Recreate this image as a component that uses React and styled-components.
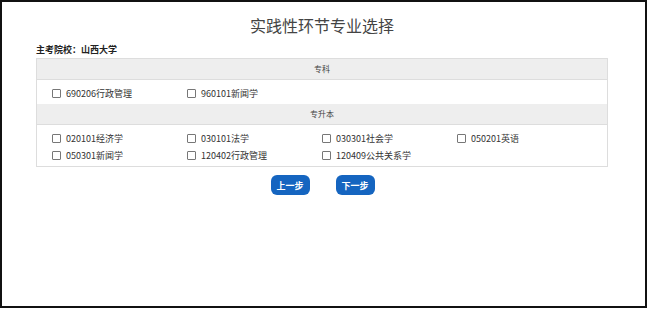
import React from "react";
import styled, { createGlobalStyle } from "styled-components";

const GlobalStyle = createGlobalStyle`
  html, body {
    margin: 0;
    padding: 0;
    background: #fff;
  }
  body {
    font-family: "Noto Sans CJK SC", "Noto Sans", sans-serif;
  }
`;

const Frame = styled.div`
  box-sizing: border-box;
  width: 647px;
  height: 308px;
  border: 2px solid #111;
  padding: 0 37px 0 34px;
`;

const Title = styled.h1`
  margin: 0;
  padding-top: 12px;
  height: 26px;
  font-size: 16px;
  line-height: 22px;
  font-weight: normal;
  color: #444;
  text-align: center;
`;

const School = styled.div`
  margin-top: 4px;
  font-size: 9px;
  line-height: 12px;
  font-weight: bold;
  color: #222;
`;

const Table = styled.div`
  margin-top: 2px;
  border: 1px solid #ddd;
`;

const Header = styled.div`
  height: 20px;
  line-height: 20px;
  background: #eee;
  border-bottom: 1px solid #ddd;
  text-align: center;
  font-size: 8px;
  color: #444;
`;

const Grid = styled.div`
  display: grid;
  grid-template-columns: repeat(4, 135px);
  row-gap: 5px;
  padding: 7px 15px 5px;
`;

const Item = styled.label`
  display: flex;
  align-items: center;
  gap: 5px;
  height: 12px;
  font-size: 9px;
  color: #333;
`;

const Box = styled.span`
  width: 7px;
  height: 7px;
  border: 1px solid #777;
  border-radius: 1px;
  background: #fff;
`;

const Actions = styled.div`
  display: flex;
  justify-content: center;
  gap: 26px;
  margin-top: 8px;
  padding-left: 1px;
`;

const Button = styled.button`
  display: block;
  width: 39px;
  height: 20px;
  padding: 0;
  border: none;
  border-radius: 6px;
  background: #1565c0;
  color: #fff;
  font-family: inherit;
  font-size: 9px;
  font-weight: bold;
`;

const sections = [
  { name: "专科", items: ["690206行政管理", "960101新闻学"] },
  {
    name: "专升本",
    items: [
      "020101经济学",
      "030101法学",
      "030301社会学",
      "050201英语",
      "050301新闻学",
      "120402行政管理",
      "120409公共关系学",
    ],
  },
];

export default function App() {
  return (
    <>
      <GlobalStyle />
      <Frame>
        <Title>实践性环节专业选择</Title>
        <School>主考院校：山西大学</School>
        <Table>
          {sections.map((s) => (
            <React.Fragment key={s.name}>
              <Header>{s.name}</Header>
              <Grid>
                {s.items.map((it) => (
                  <Item key={it}>
                    <Box />
                    {it}
                  </Item>
                ))}
              </Grid>
            </React.Fragment>
          ))}
        </Table>
        <Actions>
          <Button>上一步</Button>
          <Button>下一步</Button>
        </Actions>
      </Frame>
    </>
  );
}
